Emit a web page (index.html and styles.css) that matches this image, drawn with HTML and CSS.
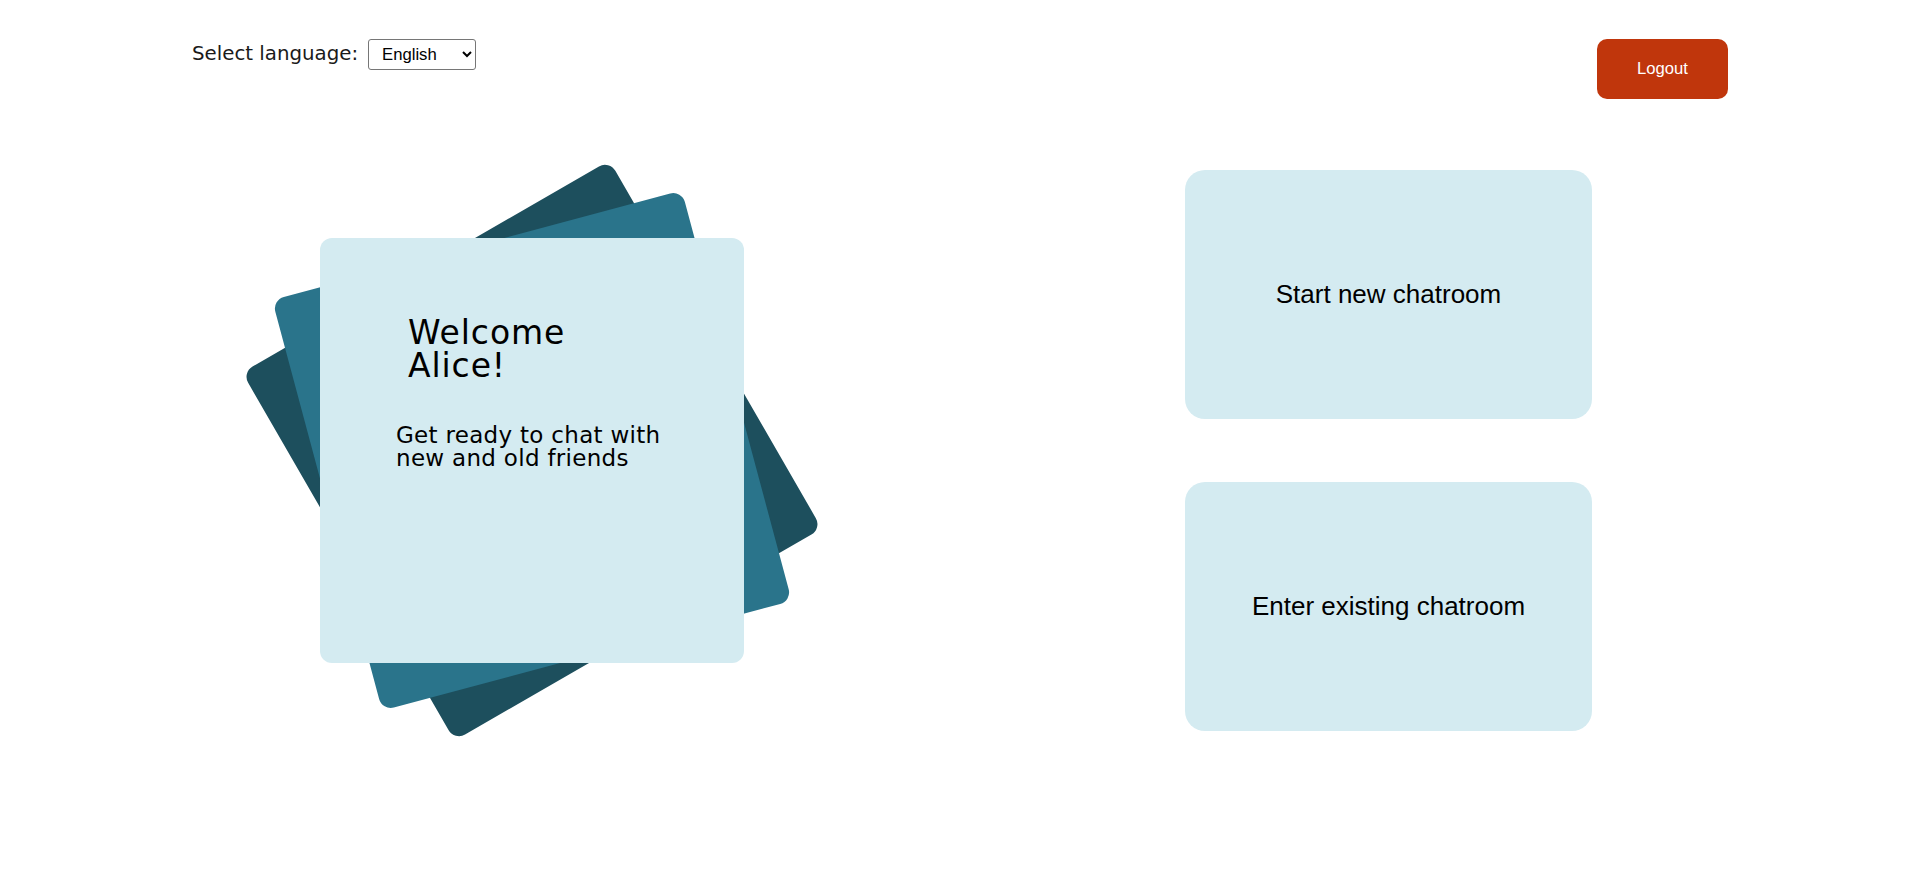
FILE: index.html
```html
<!DOCTYPE html>
<html lang="en">
<head>
<meta charset="utf-8">
<title>Chat - Home</title>
<link rel="stylesheet" href="styles.css">
</head>
<body>
<header class="topbar">
  <div class="lang">
    <label class="lang-label" for="lang">Select language:</label>
    <select id="lang" class="lang-select">
      <option>English</option>
      <option>Deutsch</option>
      <option>Español</option>
    </select>
  </div>
  <button class="logout">Logout</button>
</header>
<main class="main">
  <section class="stack">
    <div class="card card-back"></div>
    <div class="card card-mid"></div>
    <div class="card card-front">
      <h1 class="welcome">Welcome Alice!</h1>
      <p class="tagline">Get ready to chat with new and old friends</p>
    </div>
  </section>
  <section class="actions">
    <button class="action">Start new chatroom</button>
    <button class="action">Enter existing chatroom</button>
  </section>
</main>
</body>
</html>
```
FILE: styles.css
```css
html, body {
  margin: 0;
  padding: 0;
  background: #ffffff;
}

body {
  min-height: 100vh;
  font-family: "DejaVu Sans", "Open Sans", sans-serif;
  color: #111;
}

.topbar {
  display: flex;
  justify-content: space-between;
  align-items: flex-start;
  padding: 39px 192px 0 192px;
}

.lang {
  display: flex;
  align-items: baseline;
  gap: 10px;
}

.lang-label {
  font-size: 19.8px;
  color: #1a1a1a;
}

.lang-select {
  font-family: "Liberation Sans", Arial, sans-serif;
  font-size: 16.67px;
  width: 108px;
  height: 31px;
  padding: 0 4px 0 9px;
  border: 1px solid #767676;
  border-radius: 3px;
  background: #fff;
  color: #000;
}

.logout {
  width: 131px;
  height: 60px;
  border: none;
  border-radius: 10px;
  background: #c0360c;
  color: #fff;
  font-family: "Liberation Sans", Arial, sans-serif;
  font-size: 16.67px;
  cursor: pointer;
}

.main {
  display: flex;
  align-items: flex-start;
  padding-left: 320px;
  padding-bottom: 120px;
}

.stack {
  display: grid;
  margin-top: 139px;
}

.card {
  grid-area: 1 / 1;
  width: 424px;
  height: 425px;
  border-radius: 12px;
  box-sizing: border-box;
}

.card-back {
  z-index: 0;
  background: #1d4f5d;
  transform: rotate(-30deg);
}

.card-mid {
  z-index: 1;
  background: #2a748b;
  transform: rotate(-15deg);
}

.card-front {
  z-index: 2;
  background: #d4ebf1;
  padding: 78px 0 0 76px;
}

.welcome {
  margin: 0 0 0 12px;
  width: 200px;
  font-size: 33px;
  line-height: 33px;
  font-weight: 400;
  letter-spacing: 0.9px;
  color: #000;
}

.tagline {
  margin: 42px 0 0 0;
  width: 290px;
  font-size: 23px;
  line-height: 23px;
  letter-spacing: 0.3px;
  color: #000;
}

.actions {
  display: flex;
  flex-direction: column;
  gap: 63px;
  margin-top: 71px;
  margin-left: 441px;
}

.action {
  width: 407px;
  height: 249px;
  border: none;
  border-radius: 20px;
  background: #d4ebf1;
  color: #000;
  font-family: "Liberation Sans", Arial, sans-serif;
  font-size: 26px;
  cursor: pointer;
}
```
